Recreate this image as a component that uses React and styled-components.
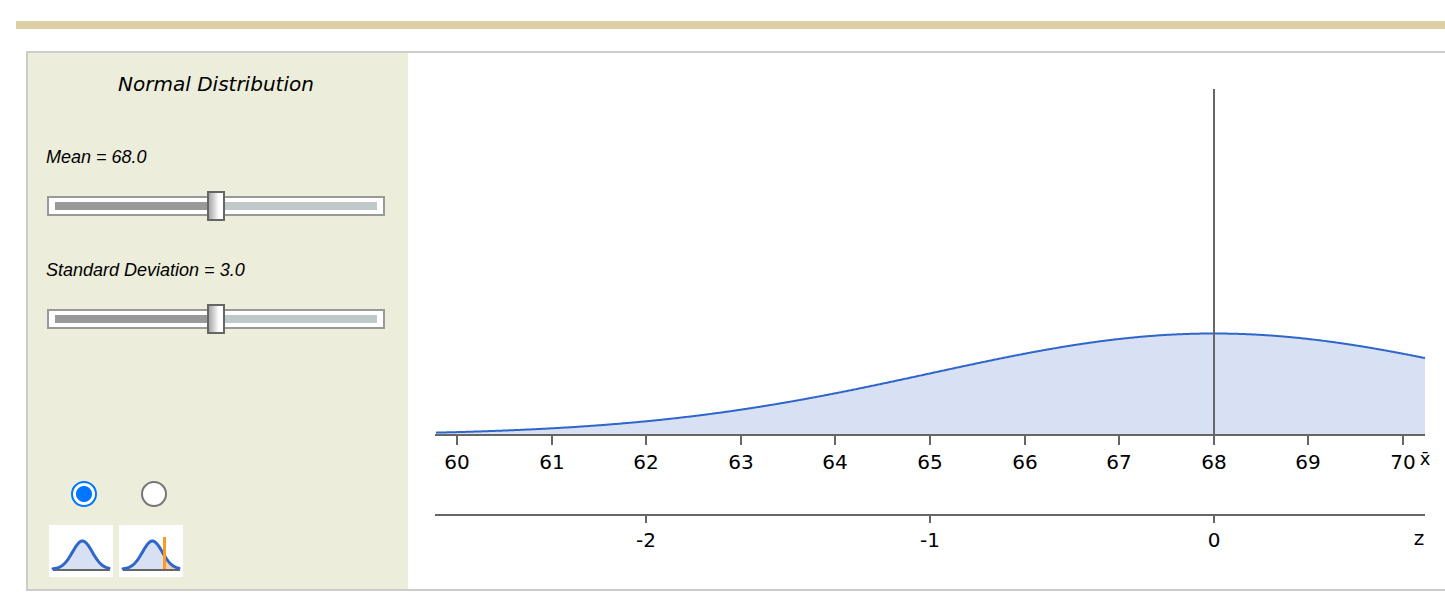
import React, { useState } from "react";
import styled, { createGlobalStyle } from "styled-components";

const GlobalStyle = createGlobalStyle`
  *, *::before, *::after { box-sizing: border-box; }
  body { margin: 0; background: #fff; color: #000; }
`;

const Page = styled.main`
  padding-top: 21px;
  font-family: Verdana, "DejaVu Sans", sans-serif;
`;

const Rule = styled.div`
  height: 8px;
  margin-left: 16px;
  background: #dccfa6;
`;

const Applet = styled.section`
  display: grid;
  grid-template-columns: 380px minmax(0, 1fr);
  margin: 22px 0 16px 26px;
  border: 2px solid #ccc;
  border-right: none;
`;

const Controls = styled.form`
  display: flex;
  flex-direction: column;
  min-height: 480px;
  padding: 17px 22px 12px 18px;
  background: #ecedda;
`;

const Title = styled.h1`
  margin: 0 0 47px;
  font-size: 20px;
  line-height: 28px;
  font-weight: 400;
  font-style: italic;
  text-align: center;
`;

const Field = styled.div`
  display: flex;
  flex-direction: column;
  gap: 22px;
  margin-bottom: 37px;
`;

const FieldLabel = styled.label`
  font-family: Arial, "Liberation Sans", sans-serif;
  font-size: 18px;
  line-height: 24px;
  font-style: italic;
`;

const Range = styled.input`
  appearance: none;
  height: 30px;
  margin: 0 1px;
  background: transparent;

  &::-webkit-slider-runnable-track {
    height: 20px;
    border: 2px solid #999;
    background:
      linear-gradient(to right, #999 var(--fill), #c0c9ca var(--fill)) center / calc(100% - 12px) 8px no-repeat,
      #fff;
  }

  &::-webkit-slider-thumb {
    appearance: none;
    width: 18px;
    height: 30px;
    margin-top: -7px;
    border: 2px solid #666;
    border-radius: 0;
    background: linear-gradient(to right, #a6a6a6, #fff 70%);
  }
`;

const Options = styled.div`
  display: flex;
  margin: auto 0 0 3px;
`;

const Option = styled.label`
  display: flex;
  flex-direction: column;
  gap: 18px;
  width: 70px;
  cursor: pointer;
`;

const Radio = styled.input`
  appearance: none;
  align-self: center;
  width: 26px;
  height: 26px;
  margin: 0;
  border: 2px solid #767676;
  border-radius: 50%;
  background: #fff;

  &:checked {
    border-color: #0075ff;
    background: radial-gradient(circle, #0075ff 7.5px, #fff 8.5px);
  }
`;

const Thumbnail = styled.svg`
  display: block;
  width: 64px;
  height: 52px;
  background: #fff;
`;

const Chart = styled.svg`
  display: block;
  width: 100%;
  height: auto;
  overflow: visible;
`;

const AxisLine = styled.path`
  fill: none;
  stroke: #666;
  stroke-width: 2;
`;

const AxisText = styled.text`
  font-size: ${(p) => (p.$small ? 18 : 20)}px;
  text-anchor: middle;
`;

const Curve = styled.path`
  fill: none;
  stroke: #2f66cb;
  stroke-width: ${(p) => p.$weight || 2};
  stroke-linecap: ${(p) => (p.$weight ? "round" : "butt")};
`;

function gaussianPoints(from, to, center, sigma, height, base) {
  const pts = [];
  for (let x = from; x <= to; x += 1) {
    const z = (x - center) / sigma;
    pts.push(`${x} ${(base - height * Math.exp(-0.5 * z * z)).toFixed(2)}`);
  }
  return pts.join(" L");
}

const bell = gaussianPoints(4, 60, 33.4, 9.9, 28, 44);
const tail = gaussianPoints(46, 60, 33.4, 9.9, 28, 44);

function BellIcon({ marker }) {
  return (
    <Thumbnail viewBox="0 0 64 52" aria-hidden="true">
      <path d={`M4 44 L${bell} L60 44Z`} fill="#d8e0f4" />
      {marker && <path d={`M46 44 L${tail} L60 44Z`} fill="#f0cdb4" />}
      <AxisLine d="M4 45H61" />
      <Curve d={`M${bell}`} $weight={3} />
      {marker && <rect x="44" y="12" width="3" height="32" fill="#ff9a1f" />}
    </Thumbnail>
  );
}

const LEFT = 27;
const RIGHT = 1017;
const BASE = 382;
const UNIT = 94.6;
const xOf = (v) => 49 + (v - 60) * UNIT;
const ticks = Array.from({ length: 11 }, (_, i) => 60 + i);

function Distribution({ mean, sd }) {
  const curve = gaussianPoints(28, RIGHT, xOf(mean), sd * UNIT, 304.5 / sd, BASE);
  const center = Math.round(xOf(mean));
  const zTicks = [-3, -2, -1, 0, 1, 2, 3]
    .map((z) => ({ z, x: Math.round(xOf(mean + z * sd)) }))
    .filter(({ x }) => x >= LEFT && x <= RIGHT);
  return (
    <Chart viewBox="0 0 1037 536" role="img" aria-label="Normal curve">
      <path d={`M28 ${BASE} L${curve} L${RIGHT} ${BASE}Z`} fill="#d8e0f4" />
      <Curve d={`M${curve}`} />
      <AxisLine d={`M${LEFT} ${BASE}H${RIGHT}`} />
      <AxisLine d={`M${center} 36V392`} />
      {ticks.map((v) => (
        <g key={v}>
          <AxisLine d={`M${Math.round(xOf(v))} 383v9`} />
          <AxisText x={Math.round(xOf(v))} y="416">{v}</AxisText>
        </g>
      ))}
      <AxisText x="1017" y="412" $small>x̄</AxisText>
      <AxisLine d={`M${LEFT} 462H${RIGHT}`} />
      {zTicks.map(({ z, x }) => (
        <g key={z}>
          <AxisLine d={`M${x} 463v7`} />
          <AxisText x={x} y="494">{z}</AxisText>
        </g>
      ))}
      <AxisText x="1011" y="492">z</AxisText>
    </Chart>
  );
}

function SliderField({ id, label, value, min, max, onChange }) {
  const fill = `${((value - min) / (max - min)) * 100}%`;
  return (
    <Field>
      <FieldLabel htmlFor={id}>{label} = {value.toFixed(1)}</FieldLabel>
      <Range
        id={id}
        type="range"
        min={min}
        max={max}
        step="0.1"
        value={value}
        onChange={(e) => onChange(Number(e.target.value))}
        style={{ "--fill": fill }}
      />
    </Field>
  );
}

export default function App() {
  const [mean, setMean] = useState(68);
  const [sd, setSd] = useState(3);
  const [mode, setMode] = useState("curve");
  return (
    <>
      <GlobalStyle />
      <Page>
        <Rule />
        <Applet>
          <Controls>
            <Title>Normal Distribution</Title>
            <SliderField id="mean" label="Mean" value={mean} min={66} max={70} onChange={setMean} />
            <SliderField id="sd" label="Standard Deviation" value={sd} min={1} max={5} onChange={setSd} />
            <Options>
              {["curve", "marker"].map((m) => (
                <Option key={m}>
                  <Radio
                    type="radio"
                    name="mode"
                    aria-label={m === "curve" ? "Curve only" : "Curve with marker"}
                    checked={mode === m}
                    onChange={() => setMode(m)}
                  />
                  <BellIcon marker={m === "marker"} />
                </Option>
              ))}
            </Options>
          </Controls>
          <Distribution mean={mean} sd={sd} />
        </Applet>
      </Page>
    </>
  );
}
